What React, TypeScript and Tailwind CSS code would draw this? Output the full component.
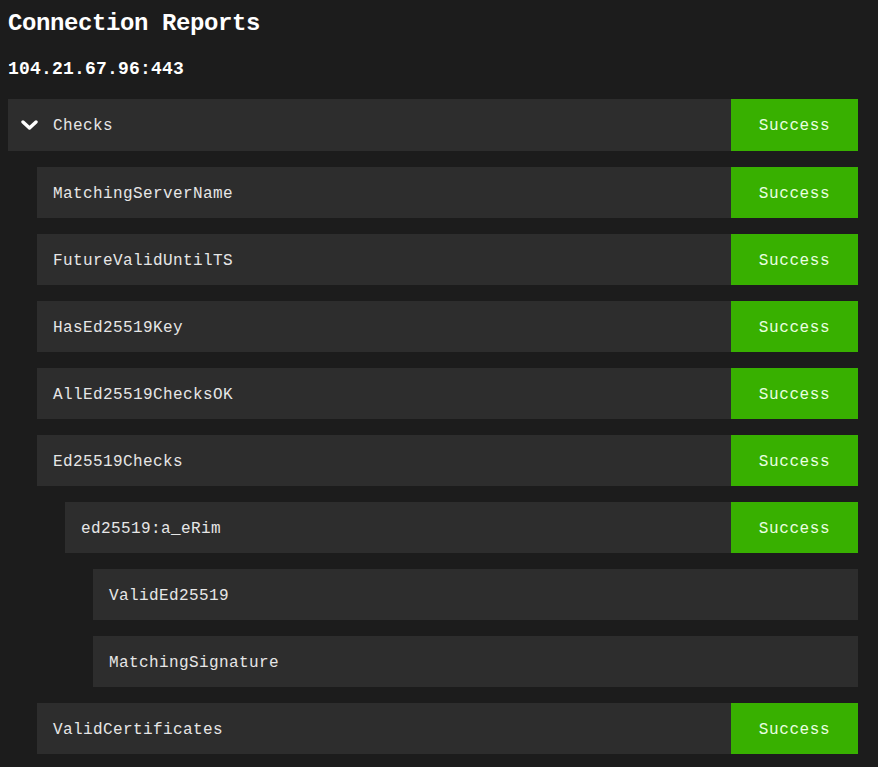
import React from 'react';

type Check = {
  name: string;
  status?: string;
  children?: Check[];
};

const checks: Check[] = [
  { name: 'MatchingServerName', status: 'Success' },
  { name: 'FutureValidUntilTS', status: 'Success' },
  { name: 'HasEd25519Key', status: 'Success' },
  { name: 'AllEd25519ChecksOK', status: 'Success' },
  {
    name: 'Ed25519Checks',
    status: 'Success',
    children: [
      {
        name: 'ed25519:a_eRim',
        status: 'Success',
        children: [{ name: 'ValidEd25519' }, { name: 'MatchingSignature' }],
      },
    ],
  },
  { name: 'ValidCertificates', status: 'Success' },
];

function StatusBox({ status }: { status?: string }) {
  if (!status) return null;
  return (
    <div className="w-[127px] shrink-0 flex items-center justify-center pt-[2px] bg-[#38b000] text-[#eaffe0] tracking-[0.6px]">
      {status}
    </div>
  );
}

function CheckRow({ check }: { check: Check }) {
  return (
    <div className="flex flex-col gap-4">
      <div className="flex h-[51px]">
        <div className="flex-1 flex items-center px-4 pt-[2px] bg-[#2d2d2d] text-[#e6e6e6]">{check.name}</div>
        <StatusBox status={check.status} />
      </div>
      {check.children && (
        <div className="ml-[28px] flex flex-col gap-4">
          {check.children.map((c) => (
            <CheckRow key={c.name} check={c} />
          ))}
        </div>
      )}
    </div>
  );
}

export default function App() {
  return (
    <div
      className="min-h-screen bg-[#1c1c1c] pl-2 pr-5 pt-3 pb-4 text-white tracking-[0.4px]"
      style={{ fontFamily: '"Liberation Mono", monospace' }}
    >
      <h1 className="text-2xl leading-6 font-bold tracking-[-0.4px]">Connection Reports</h1>
      <h2 className="mt-6 text-lg leading-[18px] font-bold tracking-[0.2px]">104.21.67.96:443</h2>

      <div className="mt-[21px] flex flex-col gap-4 text-base">
        <div className="flex h-[52px]">
          <div className="flex-1 flex items-center pl-[13px] pt-[2px] bg-[#2d2d2d] text-[#e6e6e6]">
            <svg width="17" height="10" viewBox="0 0 17 10" className="shrink-0 -mt-[2px]">
              <polyline
                points="2,2 8.5,8 15,2"
                fill="none"
                stroke="white"
                strokeWidth="3.4"
                strokeLinecap="round"
                strokeLinejoin="round"
              />
            </svg>
            <span className="ml-[15px]">Checks</span>
          </div>
          <StatusBox status="Success" />
        </div>

        <div className="ml-[29px] flex flex-col gap-4">
          {checks.map((c) => (
            <CheckRow key={c.name} check={c} />
          ))}
        </div>
      </div>
    </div>
  );
}
